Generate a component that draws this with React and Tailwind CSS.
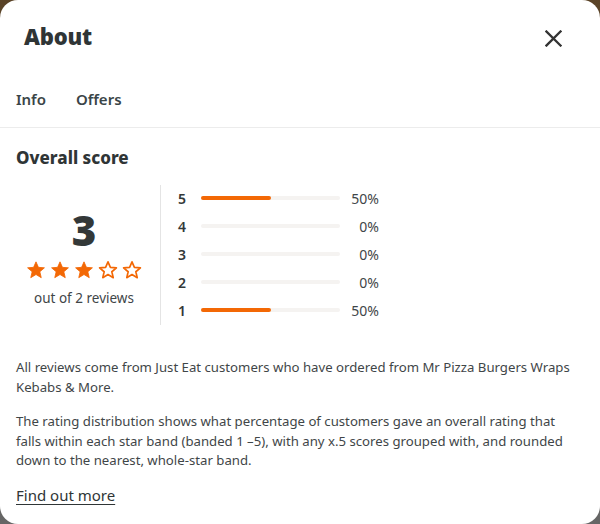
import React from "react";

const Star = ({ filled }) => (
  <svg width="20" height="20" viewBox="0 0 24 24" className="block">
    <path
      d="M12 2.2l2.9 6.6 7.2.6-5.5 4.7 1.7 7.1L12 17.4l-6.3 3.8 1.7-7.1L1.9 9.4l7.2-.6L12 2.2z"
      fill={filled ? "#f36805" : "none"}
      stroke="#f36805"
      strokeWidth={filled ? "1" : "2"}
      strokeLinejoin="round"
    />
  </svg>
);

const rows = [
  { label: "5", pct: 50 },
  { label: "4", pct: 0 },
  { label: "3", pct: 0 },
  { label: "2", pct: 0 },
  { label: "1", pct: 50 },
];

export default function App() {
  return (
    <div className="w-[600px] h-[524px] bg-gradient-to-b from-[#5a4327] to-[#666666] overflow-hidden">
      <div
        className="w-[600px] h-[524px] bg-white rounded-[18px] overflow-hidden text-[#242e30]"
        style={{ fontFamily: '"Noto Sans", "Open Sans", sans-serif' }}
      >
        {/* Header */}
        <div className="flex items-center justify-between pt-[22px] pl-[24px] pr-[38px] h-[50px]">
          <h1 className="text-[22px] leading-[28px] font-black tracking-[-0.2px] text-[#2f3536]">About</h1>
          <svg width="17" height="17" viewBox="0 0 17 17" className="block mt-[4px]">
            <path d="M1.5 1.5L15.5 15.5M15.5 1.5L1.5 15.5" stroke="#333333" strokeWidth="2.3" strokeLinecap="square" />
          </svg>
        </div>

        {/* Tabs */}
        <div className="flex items-center gap-[30px] px-[16px] h-[53px] mt-[25px] pb-[3px] border-b border-[#ececec] text-[15px] font-semibold text-[#3a4547]">
          <span>Info</span>
          <span>Offers</span>
        </div>

        {/* Overall score */}
        <div className="px-[16px] pt-[18px]">
          <h2 className="text-[17px] leading-[24px] font-extrabold text-[#2f3536]">Overall score</h2>

          <div className="flex mt-[15px] h-[140px]">
            <div className="w-[144px] pr-[8px] flex flex-col items-center justify-center pt-[6px]">
              <div className="text-[42px] leading-[40px] font-black text-[#333838]">3</div>
              <div className="flex gap-[4px] mt-[10px]">
                <Star filled />
                <Star filled />
                <Star filled />
                <Star />
                <Star />
              </div>
              <div className="text-[13.5px] leading-[18px] mt-[9px] text-[#3f4648]">out of 2 reviews</div>
            </div>
            <div className="border-l border-[#e4e4e4] pl-[17px] flex flex-col">
              {rows.map((r) => (
                <div key={r.label} className="flex items-center h-[28px] first:-mt-[1px]">
                  <span className="w-[23px] text-[14px] font-semibold text-[#333838]">{r.label}</span>
                  <div className="w-[139px] h-[4px] rounded-full bg-[#f5f3f1]">
                    <div className="h-[4px] rounded-full bg-[#f36805]" style={{ width: `${r.pct}%` }} />
                  </div>
                  <span className="w-[39px] text-right text-[14px] text-[#3f4648]">{r.pct}%</span>
                </div>
              ))}
            </div>
          </div>

          <p className="mt-[33px] text-[13.2px] leading-[19.5px] text-[#3f4648]">
            All reviews come from Just Eat customers who have ordered from Mr Pizza Burgers Wraps Kebabs &amp; More.
          </p>
          <p className="w-[560px] mt-[15px] text-[13.2px] leading-[19.5px] text-[#3f4648]">
            The rating distribution shows what percentage of customers gave an overall rating that falls within each star band (banded 1 –5), with any x.5 scores grouped with, and rounded down to the nearest, whole-star band.
          </p>
          <a className="inline-block mt-[14px] text-[15px] leading-[20px] underline underline-offset-[3px] text-[#2f3536]">
            Find out more
          </a>
        </div>
      </div>
    </div>
  );
}
